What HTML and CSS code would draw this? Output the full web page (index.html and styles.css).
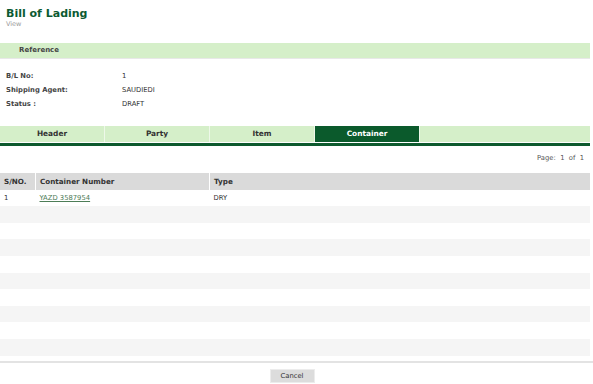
FILE: index.html
```html
<!DOCTYPE html>
<html lang="en">
<head>
    <meta charset="UTF-8">
    <title>Bill of Lading - View</title>
    <link rel="stylesheet" href="styles.css">
</head>
<body>
    <div class="page">
        <div class="title-block">
            <h1>Bill of Lading</h1>
            <div class="subtitle">View</div>
        </div>

        <div class="panel-head">Reference</div>
        <div class="fields">
            <div class="field-label">B/L No:</div>
            <div class="field-value">1</div>
            <div class="field-label">Shipping Agent:</div>
            <div class="field-value">SAUDIEDI</div>
            <div class="field-label">Status :</div>
            <div class="field-value">DRAFT</div>
        </div>

        <div class="tabs">
            <div class="tab">Header</div>
            <div class="tab">Party</div>
            <div class="tab">Item</div>
            <div class="tab active">Container</div>
            <div class="tab-fill"></div>
        </div>

        <div class="pager">Page:&nbsp; 1&nbsp; of&nbsp; 1</div>

        <table class="grid">
            <thead>
                <tr>
                    <th class="col-no">S/NO.</th>
                    <th class="col-num">Container Number</th>
                    <th>Type</th>
                </tr>
            </thead>
            <tbody>
                <tr><td>1</td><td><a href="#">YAZD 3587954</a></td><td>DRY</td></tr>
                <tr><td></td><td></td><td></td></tr>
                <tr><td></td><td></td><td></td></tr>
                <tr><td></td><td></td><td></td></tr>
                <tr><td></td><td></td><td></td></tr>
                <tr><td></td><td></td><td></td></tr>
                <tr><td></td><td></td><td></td></tr>
                <tr><td></td><td></td><td></td></tr>
                <tr><td></td><td></td><td></td></tr>
                <tr><td></td><td></td><td></td></tr>
            </tbody>
        </table>
    </div>

    <div class="actions">
        <button type="button" class="btn">Cancel</button>
    </div>
</body>
</html>
```

FILE: styles.css
```css
body {
    margin: 0;
    background: #fff;
    font-family: "DejaVu Sans", Verdana, sans-serif;
    color: #333;
}

.page {
    width: 590px;
}

/* Title */
.title-block {
    padding: 7px 6px 0;
}

h1 {
    margin: 0;
    font-size: 11px;
    line-height: 13px;
    color: #0b5a32;
}

.subtitle {
    font-size: 6.5px;
    line-height: 8px;
    color: #999;
}

/* Reference panel */
.panel-head {
    margin-top: 15px;
    height: 15px;
    line-height: 15px;
    padding-left: 19px;
    background: #d5efc9;
    border-bottom: 1px solid #e8e8e8;
    font-size: 7px;
    font-weight: bold;
    color: #444;
}

.fields {
    display: grid;
    grid-template-columns: 116px 1fr;
    padding: 10px 6px 0;
    font-size: 6.8px;
    line-height: 14px;
}

.field-label {
    font-weight: bold;
    color: #444;
}

.field-value {
    color: #333;
}

/* Tabs */
.tabs {
    display: flex;
    margin-top: 15px;
    padding-bottom: 1px;
    border-bottom: 3px solid #0d5a2e;
}

.tab {
    width: 104px;
    height: 16px;
    line-height: 16px;
    background: #d5efc9;
    border-right: 1px solid #eef8e9;
    text-align: center;
    font-size: 7.4px;
    font-weight: bold;
    color: #333;
}

.tab.active {
    background: #0b5a2c;
    color: #fff;
}

.tab-fill {
    flex: 1;
    background: #d5efc9;
}

/* Pager */
.pager {
    margin-top: 7px;
    padding-right: 6px;
    text-align: right;
    font-size: 6.8px;
    line-height: 10px;
    color: #555;
}

/* Grid */
.grid {
    width: 100%;
    margin-top: 10px;
    border-collapse: collapse;
    font-size: 6.8px;
}

.grid th,
.grid td {
    height: 16.6px;
    padding: 0 0 0 4px;
    text-align: left;
}

.grid th {
    background: #dadada;
    border-left: 1px solid #fff;
    font-size: 7.2px;
    color: #333;
}

.grid th:first-child {
    border-left: none;
}

.grid .col-no {
    width: 31px;
}

.grid .col-num {
    width: 169px;
}

.grid tbody tr:nth-child(even) td {
    background: #f5f5f5;
}

.grid a {
    color: #4d7d57;
    text-decoration: underline;
}

/* Footer */
.actions {
    display: flex;
    justify-content: center;
    margin-top: 5px;
    padding: 6px 9px 0 0;
    border-top: 2px solid #e3e3e3;
}

.btn {
    width: 45px;
    height: 14px;
    padding: 0;
    background: #dcdcdc;
    border: 1px solid #ececec;
    font-family: "DejaVu Sans", Verdana, sans-serif;
    font-size: 6.8px;
    color: #333;
}
```
